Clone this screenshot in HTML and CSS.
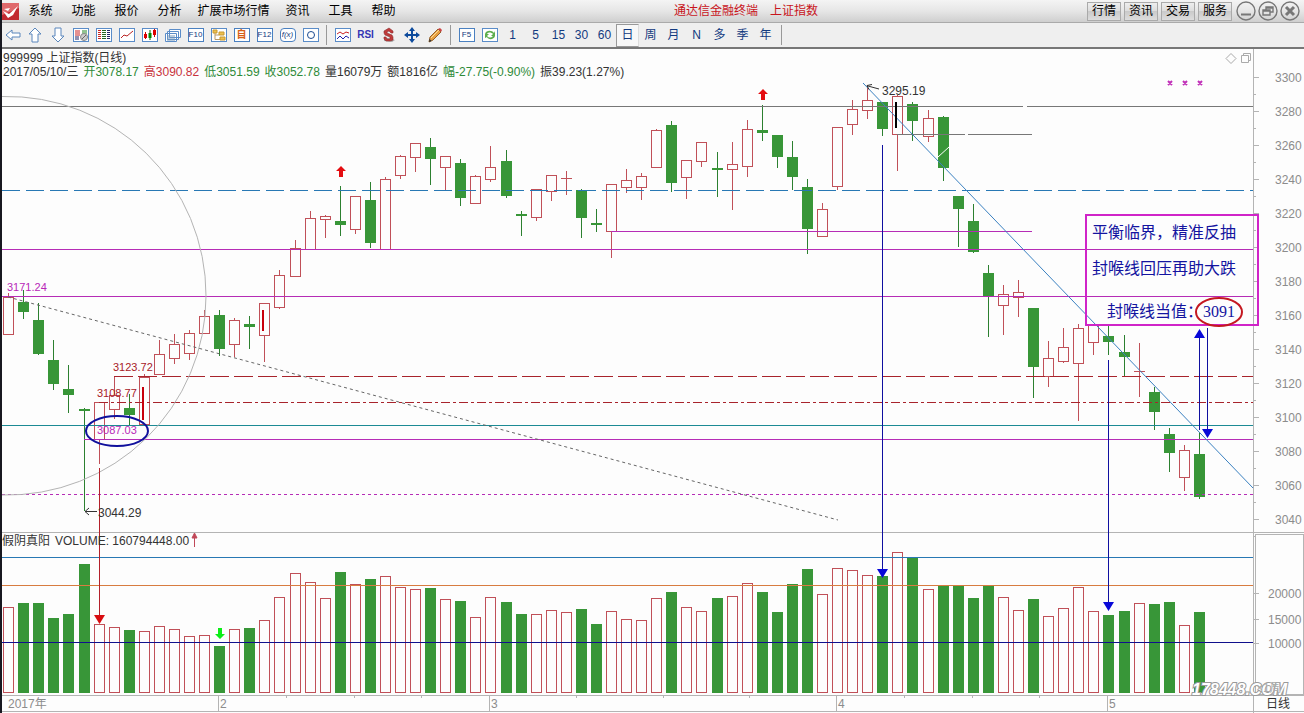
FILE: index.html
```html
<!DOCTYPE html>
<html lang="zh-CN">
<head>
<meta charset="utf-8">
<title>通达信金融终端</title>
<link rel="stylesheet" href="styles.css">
</head>
<body>
<header class="menubar">
  <svg class="logo" viewBox="0 0 17 17"><rect width="17" height="17" fill="#c22a30"/><path d="M0 0h17v5L0 12z" fill="#e0696c"/><path d="M1 8l6 3 9-8-5 9-5 3z" fill="#fff"/><path d="M2 6l4 2 2-3z" fill="#fff"/></svg>
  <nav class="menus">
    <button>系统</button><button>功能</button><button>报价</button><button>分析</button><button class="wide">扩展市场行情</button><button>资讯</button><button>工具</button><button>帮助</button>
  </nav>
  <h1 class="title"><span>通达信金融终端</span><span>上证指数</span></h1>
  <div class="links">
    <button>行情</button><button>资讯</button><button>交易</button><button>服务</button>
  </div>
  <div class="winctl">
    <button aria-label="最小化"><svg viewBox="0 0 20 20"><circle cx="10" cy="10" r="9"/><path d="M5 13.500h10" stroke-width="2"/></svg></button>
    <button aria-label="还原"><svg viewBox="0 0 20 20"><circle cx="10" cy="10" r="9"/><path d="M8 9V6h7v5h-3M5 9h7v5H5zM5 10h7M8 7h7"/></svg></button>
    <button aria-label="关闭"><svg viewBox="0 0 20 20"><circle cx="10" cy="10" r="9"/><path d="M6 6l8 8M14 6l-8 8" stroke-width="3"/></svg></button>
  </div>
</header>

<div class="toolbar">
  <button aria-label="后退"><svg viewBox="0 0 16 16"><path class="arrow" d="M1 8l6-5v3h8v4H7v3z"/></svg></button>
  <button aria-label="上"><svg viewBox="0 0 16 16"><path class="arrow" d="M8 1l6 6h-3v8H5V7H2z"/></svg></button>
  <button aria-label="下"><svg viewBox="0 0 16 16"><path class="arrow" d="M8 15l6-6h-3V1H5v8H2z"/></svg></button>
  <button aria-label="行情"><svg viewBox="0 0 16 16"><rect class="frame" x=".5" y="1.500" width="15" height="13"/><path d="M2 4h5M2 6h5M2 8h5" stroke="#c22"/><path d="M9 4h5M9 6h5" stroke="#282"/><path d="M2 10h4M2 12h4" stroke="#226"/><circle cx="11" cy="10" r="3.500" fill="#ccc" stroke="#888"/><path d="M9 12l4-4" stroke="#666"/></svg></button>
  <button aria-label="报价表"><svg viewBox="0 0 16 16"><rect class="frame" x=".5" y="1.500" width="15" height="13"/><path d="M2 3.500h3M2 5.500h3M2 7.500h3M2 9.500h3M2 11.500h3" stroke="#c22"/><path d="M6 3.500h4M6 5.500h4M6 7.500h4M6 9.500h4M6 11.500h4" stroke="#262"/><path d="M11 3.500h3M11 5.500h3M11 7.500h3M11 9.500h3M11 11.500h3" stroke="#226"/></svg></button>
  <button aria-label="分时"><svg viewBox="0 0 16 16"><rect class="frame" x=".5" y="1.500" width="15" height="13"/><path d="M2 11l3-3 3 1 6-5" stroke="#b22" fill="none"/></svg></button>
  <button aria-label="K线"><svg viewBox="0 0 16 16"><rect class="frame" x=".5" y="1.500" width="15" height="13"/><path d="M3.500 5v7M12.500 2v8" stroke="#c00"/><path d="M8 3v10" stroke="#060"/><path d="M2 7h3v4H2zM11 3h3v5h-3z" fill="#d00"/><path d="M6.500 6h3v5h-3z" fill="#080"/></svg></button>
  <button aria-label="窗口"><svg viewBox="0 0 16 16"><path class="frame" d="M4.500 2.500h11v8h-11zM2.500 4.500h11v8h-11zM.5 6.500h11v8H.5z"/><path d="M2 9h8M2 11h8M2 13h8" stroke="#79b"/></svg></button>
  <button class="key"><span>F10</span></button>
  <button aria-label="树"><svg viewBox="0 0 16 16"><rect class="frame" x=".5" y="1.500" width="15" height="13"/><path d="M4 5v7.500h5M4 8h4" stroke="#b96" fill="none"/><path d="M2 3h4v3H2zM8 5h5v3H8zM9 10h5v3H9z" fill="#edc050" stroke="#c99a30"/></svg></button>
  <button class="key orange"><span>自</span></button>
  <button class="key"><span>F12</span></button>
  <button class="key round"><span>f(x)</span></button>
  <button aria-label="圆"><svg viewBox="0 0 16 16"><rect class="frame" x=".5" y="1.500" width="15" height="13"/><circle cx="8" cy="8" r="3.500" fill="none" stroke="#1a4a90"/></svg></button>
  <i class="sep"></i>
  <button aria-label="指标"><svg viewBox="0 0 16 16"><rect class="frame" x=".5" y="1.500" width="15" height="13"/><path d="M2 7l3-2 3 2 3-2 3 1" stroke="#c22" fill="none"/><path d="M2 12l3-3 3 3 3-3 3 2" stroke="#22a" fill="none"/></svg></button>
  <button class="rsi">RSI</button>
  <button aria-label="除权"><svg viewBox="0 0 16 16"><path d="M3 12l4-1 7 2-3 2-8-1z" fill="#aaa"/><path d="M8 1l4 3v2h-2L8 4 6 5v1l5 2 1 2v3l-3 1H5l-2-2v-2h2l1 2h3v-2L4 8 3 6V4z" fill="#c03a3a" stroke="#8a3030" stroke-width=".6"/></svg></button>
  <button aria-label="移动"><svg viewBox="0 0 16 16"><path d="M8 0l3 4H9v3h3V5l4 3-4 3V9H9v3h2l-3 4-3-4h2V9H4v2L0 8l4-3v2h3V4H5z" fill="#0d4a9c"/></svg></button>
  <button aria-label="画线"><svg viewBox="0 0 16 16"><path d="M2 15l1-5 8-8 3 3-8 8z" fill="#e8a040" stroke="#94602a"/><path d="M11 2l2-1 2 2-1 2z" fill="#c44"/><path d="M2 15l.6-3 2 2z" fill="#333"/><path d="M4 11l8-8" stroke="#fbdc98"/></svg></button>
  <i class="sep"></i>
  <button class="key"><span>F5</span></button>
  <button aria-label="刷新"><svg viewBox="0 0 16 16"><rect class="frame" x=".5" y="1.500" width="15" height="13"/><path d="M3 7c1-4 7-4 9-1l1-2v5H9l2-2C9 5 6 5 5 7zM13 9c-1 4-7 4-8 1l-2 1V7h4L5 9c2 2 4 2 6 0z" fill="#5dae4e"/></svg></button>
  <button>1</button><button>5</button><button>15</button><button>30</button><button>60</button><button class="on">日</button><button>周</button><button>月</button><button>N</button><button>多</button><button>季</button><button>年</button>
  <i class="sep"></i>
</div>

<main class="chart">
  <div class="info">
    <div>999999 上证指数(日线)</div>
    <div class="quote"><span>2017/05/10/三</span><span class="down">开3078.17</span><span class="up">高3090.82</span><span class="down">低3051.59</span><span class="down">收3052.78</span><span>量16079万</span><span>额1816亿</span><span class="down">幅-27.75(-0.90%)</span><span>振39.23(1.27%)</span></div>
  </div>
  <svg class="plot" viewBox="2 49 1302 664">
    <g id="axis" class="axis crisp"></g>
    <g id="candles"></g>
    <g id="rules"></g>
    <g class="dashes">
      <path class="blue" stroke-dasharray="18 6" d="M2 190.500H1253"/>
      <path class="magenta" stroke-dasharray="3 3" d="M2 494.500H1253"/>
      <path class="red" stroke-dasharray="19 5" d="M114 376.500H1253"/>
      <path class="red" stroke-dasharray="9 3 3 3" d="M99 402.500H1253"/>
    </g>
    <g fill="none">
      <path d="M2 96.500A199 199 0 0 1 206 296A199 199 0 0 1 2 495" stroke="#b4b4b4"/>
      <path d="M8 297L838 520" stroke="#666" stroke-dasharray="3 3"/>
      <path d="M863 83L1253 488" stroke="#3a80c0"/>
      <path d="M938 157l11-10" stroke="#fff"/>
    </g>
    <path d="M142 387h2v33h-2zM262 310h2v21h-2z" fill="#c8000c"/>
    <path d="M895 102h2v26h-2z" fill="#000"/>
    <rect x="99" y="468" width="1" height="150" fill="#b4202a"/>
    <g fill="#1010a0">
      <rect x="882" y="145" width="1" height="425"/>
      <rect x="1108" y="360" width="1" height="243"/>
      <rect x="1199" y="334" width="1" height="96"/>
      <rect x="1207" y="328" width="1" height="103"/>
    </g>
    <path d="M94 615h11l-5.500 9z" fill="#d80c10"/>
    <path d="M877 569h11l-5.500 9zM1103 602h11l-5.500 9zM1202 429h11l-5.500 9zM1194 338h11l-5.500-9z" fill="#0808d8"/>
    <path class="redmark" d="M341 166l5 5h-3v6h-4v-6h-3zM763 89l5 5h-3v6h-4v-6h-3z"/>
    <path d="M220 639l5-5h-3v-6h-4v6h-3z" fill="#0cee18"/>
    <path d="M194.500 547V534M192 538l2.500-5 2.500 5z" stroke="#c04858" fill="#c04858"/>
    <g fill="none" stroke="#333"><path d="M97 511.500H85M89 508l-4 3.500 4 3.500M879 89L868 86M872 84.500l-5 1 2 4"/></g>
    <path d="M1168 81l4 4m0-4l-4 4M1183 81l4 4m0-4l-4 4M1198 81l4 4m0-4l-4 4" stroke="#c030b8" stroke-width="2"/>
    <path d="M1226 58.500l5-5 5 5-5 5zM1241.500 55.500h7v7h-7zM1243.500 55.500v-2h7v7h-2" stroke="#aaa" fill="none"/>

    <g class="label">
      <text class="mag small" x="7" y="291">3171.24</text>
      <text class="crim small" x="113" y="371">3123.72</text>
      <text class="crim small" x="97" y="397">3108.77</text>
      <text class="mag small" x="97" y="434">3087.03</text>
      <text x="98" y="517">3044.29</text>
      <text x="882" y="95">3295.19</text>
      <text x="2" y="545">假阴真阳</text>
      <text x="55" y="545">VOLUME: 160794448.00</text>
      <text x="1266" y="708">日线</text>
    </g>
    <ellipse cx="117" cy="431" rx="31" ry="15" fill="none" stroke="#10109c" stroke-width="2"/>

    <rect x="1086" y="215" width="172" height="110" fill="none" stroke="#d024c8" stroke-width="2"/>
    <g class="note">
      <text x="1092" y="238">平衡临界，精准反抽</text>
      <text x="1092" y="274">封喉线回压再助大跌</text>
      <text x="1107" y="317">封喉线当值：</text>
      <text x="1203" y="317" class="num">3091</text>
    </g>
    <ellipse cx="1219" cy="312" rx="23" ry="14" fill="none" stroke="#c41820" stroke-width="2"/>

    <g class="mark"><text x="1192" y="695">178448.COM</text><text class="box" x="1256" y="692">×1周</text></g>
  </svg>
</main>
<script src="chart.js"></script>
</body>
</html>
```

FILE: styles.css
```css
* { box-sizing: border-box; }
body {
  margin: 0;
  border-left: 2px solid #181820;
  background: #fdfdfd;
  color: #333;
  font: 12px/14px "Liberation Sans", "Noto Sans CJK SC", sans-serif;
}
button {
  padding: 0;
  border: 0;
  background: none;
  color: inherit;
  font: inherit;
}
button svg { display: block; }

.menubar {
  display: flex;
  align-items: center;
  height: 23px;
  padding-right: 4px;
  border-bottom: 1px solid #aaa;
  background: linear-gradient(#f4f4f4, #e6e6e6 50%, #cfcfcf);
  color: #000;
}
.logo { width: 17px; height: 17px; }
.menus { display: flex; }
.menus button { width: 43px; }
.menus .wide { width: 85px; }
.title {
  display: flex;
  flex: 1;
  justify-content: center;
  gap: 12px;
  margin: 0;
  color: #c8141c;
  font-size: 12px;
  font-weight: normal;
}
.links { display: flex; gap: 3px; }
.links button {
  width: 34px;
  height: 19px;
  border: 1px solid #aaa;
  background: linear-gradient(#eee, #dcdcdc 50%, #cacaca 50%, #ddd);
}
.winctl { display: flex; gap: 2px; margin-left: 4px; }
.winctl svg {
  width: 20px;
  height: 20px;
  fill: none;
  stroke: #777;
  stroke-width: 1.4px;
}

.toolbar {
  display: flex;
  align-items: center;
  height: 26px;
  border-bottom: 2px solid #777;
  background: #efefef;
  color: #123a80;
}
.toolbar button {
  display: flex;
  align-items: center;
  justify-content: center;
  width: 23px;
  height: 23px;
}
.toolbar button:first-child { width: 21px; }
.toolbar svg { width: 16px; height: 16px; }
.sep {
  width: 1px;
  height: 20px;
  margin: 0 4px;
  background: #999;
}
.frame { fill: #fff; stroke: #5a8cc8; }
.arrow { fill: #fff; stroke: #5a86bc; }
.toolbar .on {
  border: 1px solid #999;
  border-right-color: #ddd;
  background: #f8f8f8;
}
.key span {
  width: 16px;
  height: 14px;
  border: 1px solid #4a80c0;
  background: #fff;
  font-size: 8px;
  line-height: 12px;
}
.key.orange span {
  color: #d86018;
  font-weight: bold;
  font-size: 10px;
}
.key.round span {
  border-radius: 4px;
  font-style: italic;
}
.toolbar .rsi {
  color: #3434b4;
  font-weight: bold;
  font-size: 10px;
}

.chart { position: relative; }
.info {
  position: absolute;
  top: 2px;
  left: 1px;
}
.quote { display: flex; gap: 5px; }
.up { color: #c8323c; }
.down { color: #2e8a38; }
.plot { display: block; width: 100%; }
.crisp { shape-rendering: crispEdges; }
.dashes path { fill: none; }
.blue { stroke: #2878b4; }
.magenta { stroke: #b62cb6; }
.red { stroke: #a8242c; }
.redmark { fill: #e40c10; }
.candle-up { fill: none; stroke: #c05058; }
.candle-down { fill: #389638; }
.wick-up { fill: #c05058; }
.wick-down { fill: #2c8030; }
.axis path { fill: none; stroke: #b4b4b4; }
.axis text { fill: #8c8c8c; font-size: 12px; }
.label text { fill: #333; font-size: 12px; }
.label .small { font-size: 11px; }
.label .mag { fill: #b828b8; }
.label .crim { fill: #a82028; }
.note text { fill: #1414a0; font-size: 16px; }
.note .num { font-family: "Liberation Serif", serif; }
.mark text {
  fill: #fff;
  stroke: #999;
  stroke-width: 2px;
  paint-order: stroke;
  font: italic bold 16px "Liberation Sans", sans-serif;
}
.mark .box {
  fill: #aaa;
  stroke: none;
  font: 12px "Liberation Sans", "Noto Sans CJK SC", sans-serif;
}
```

FILE: chart.js
```js
// Each day: direction, high, body top, body bottom, low, volume top.
const days = `R 293 297 334 335 607
G 290 302 312 319 603
G 303 320 354 355 603
G 340 360 384 390 618
G 365 389 395 413 614
G 408 409 411 511 564
R 402 402 439 464 624
R 376 395 409 419 627
G 394 408 415 425 630
R 374 377 424 424 631
R 340 354 374 374 626
R 334 344 358 364 629
R 330 333 353 360 636
R 310 316 333 333 635
G 310 315 349 356 646
R 318 320 344 357 629
G 316 324 327 349 628
R 303 303 335 362 620
R 270 275 307 309 597
R 240 248 276 277 573
R 211 218 249 249 582
R 215 216 219 238 598
G 186 221 225 236 572
R 196 196 229 234 584
G 182 200 243 248 579
R 177 179 249 249 576
R 155 156 175 179 587
R 143 143 157 172 589
G 138 147 159 185 588
R 156 156 167 190 599
G 159 163 198 206 601
R 175 176 203 203 617
R 146 167 179 182 597
G 150 161 196 198 602
G 211 214 216 236 614
R 189 189 217 221 614
R 175 175 191 201 610
R 171 178 178 195 612
G 189 190 218 238 609
G 209 223 225 232 624
R 184 184 231 258 611
R 169 180 187 193 619
R 173 176 187 200 620
R 129 130 167 167 598
G 121 125 183 192 592
R 160 160 177 199 607
R 142 142 161 167 611
G 152 168 170 197 598
R 142 164 169 210 596
R 120 129 166 177 583
G 105 130 133 141 592
G 135 135 157 168 612
G 141 157 177 190 584
G 179 187 229 254 569
R 203 209 236 236 594
R 127 127 186 190 568
R 100 109 124 135 570
R 85 100 110 119 575
G 102 102 129 136 576
R 95 96 134 171 552
G 102 104 121 141 557
R 110 118 136 142 589
G 116 117 168 181 586
G 196 196 209 247 586
G 204 221 252 253 598
G 265 273 297 337 586
R 285 294 305 335 597
R 280 292 297 317 610
G 308 308 367 398 599
R 341 358 376 387 616
R 328 347 361 363 608
R 324 328 363 421 587
R 325 325 342 355 611
G 325 336 342 355 615
G 335 352 357 376 611
R 343 371 371 397 603
G 387 392 412 430 604
G 428 434 453 472 602
R 445 450 477 491 625
G 432 454 497 499 612`.split('\n').map(line => {
  const [dir, ...n] = line.split(' ');
  return [dir, ...n.map(Number)];
});

const bar = (cls, x, y, w, h) =>
  h > 0 ? `<rect class="${cls}" x="${x}" y="${y}" width="${w}" height="${h}"/>` : '';

const parts = days.map(([dir, high, top, bottom, low, vol], i) => {
  const x = Math.floor(8.64 + i * 15.0725);
  if (dir === 'G') {
    return bar('wick-down', x, high, 1, low - high)
      + bar('candle-down', x - 5, top, 11, bottom - top)
      + bar('candle-down', x - 5, vol, 11, 693 - vol);
  }
  // A doji has no body height, so it is drawn as a single horizontal stroke.
  const body = top === bottom
    ? bar('wick-up', x - 5, top, 11, 1)
    : bar('candle-up', x - 4.5, top + 0.5, 10, bottom - top);
  return bar('wick-up', x, high, 1, top - high)
    + bar('wick-up', x, bottom, 1, low - bottom)
    + body
    + bar('candle-up', x - 4.5, vol + 0.5, 10, 692 - vol);
});
document.getElementById('candles').innerHTML = parts.join('');

// Horizontal levels: start x, end x, y, colour.
document.getElementById('rules').innerHTML = [
  [2, 1023, 106, '#777'], [1027, 1253, 106, '#777'],
  [897, 965, 134, '#777'], [968, 1032, 134, '#777'],
  [611, 1032, 231, '#b62cb6'], [2, 1253, 249, '#b62cb6'],
  [2, 1253, 296, '#b62cb6'], [84, 1253, 439, '#b62cb6'],
  [2, 1253, 425, '#1c8a94'], [2, 1253, 557, '#2878b4'],
  [2, 1253, 585, '#d87c40'], [2, 1253, 642, '#10108c'],
].map(([from, to, y, color]) =>
  `<rect x="${from}" y="${y}" width="${to - from}" height="1" fill="${color}"/>`
).join('');

let axis = '<path d="M1253.5 49V713M2 532.5H1304M2 695.5H1304M2 711.5H1304M1255.5 534.5H1303.5V694.5H1255.5z"/>';
for (let i = 0; i < 14; i++) {
  const y = 77 + i * 34;
  axis += `<path d="M1253 ${y + 0.5}h6M1253 ${y + 17.5}h3"/><text x="1275" y="${y + 5}">${3300 - i * 20}</text>`;
}
[[20000, 593], [15000, 619], [10000, 643]].forEach(([value, y]) => {
  axis += `<path d="M1254 ${y + 0.5}h5"/><text x="1268" y="${y + 5}">${value}</text>`;
});
[286, 354, 421, 576, 663, 749, 904, 972, 1039].forEach(x => {
  axis += `<path d="M${x + 0.5} 695v3"/>`;
});
[[218, '2'], [489, '3'], [836, '4'], [1107, '5']].forEach(([x, month]) => {
  axis += `<path d="M${x + 0.5} 695v16"/><text x="${x + 2}" y="708">${month}</text>`;
});
axis += '<text x="8" y="708">2017年</text>';
document.getElementById('axis').innerHTML = axis;
```
